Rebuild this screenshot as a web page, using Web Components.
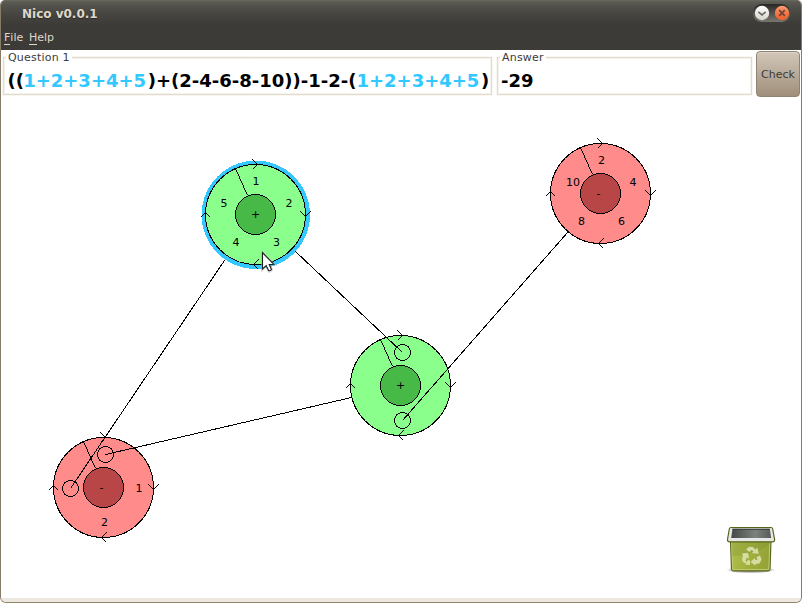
<!DOCTYPE html>
<html lang="en">
<head>
<meta charset="utf-8">
<title>Nico v0.0.1</title>
<style>
html,body{margin:0;padding:0;background:#fff;overflow:hidden}
body{font-family:"DejaVu Sans",sans-serif;font-size:11px}
</style>
</head>
<body>
<app-window></app-window>
<script>
function define(name, html, setup) {
  const t = document.createElement('template');
  t.innerHTML = html;
  customElements.define(name, class extends HTMLElement {
    connectedCallback() {
      if (this.shadowRoot) return;
      this.attachShadow({mode: 'open'}).appendChild(t.content.cloneNode(true));
      if (setup) setup(this, this.shadowRoot);
    }
  });
}

define('title-bar', `
<style>
:host{display:flex;align-items:flex-start;height:27px;padding:0 10px 0 21px;box-sizing:border-box;
 background:linear-gradient(#6b6a5f 0,#5b5a53 2px,#504f49 7px,#45443f 15px,#3c3b37 25px)}
.t{flex:1;font:bold 12px "DejaVu Sans",sans-serif;color:#dfd8c8;line-height:28px;text-shadow:0 1px 1px #2b2a27}
svg{display:block;margin-top:3px}
</style>
<div class="t"><slot></slot></div>
<svg width="39" height="20" viewBox="0 0 39 20">
 <defs>
 <linearGradient id="p" x2="0" y2="1"><stop offset="0" stop-color="#292825"/><stop offset="1" stop-color="#77766e"/></linearGradient>
 <linearGradient id="w" x2="0" y2="1"><stop offset="0" stop-color="#fff"/><stop offset="1" stop-color="#d8d4cb"/></linearGradient>
 <linearGradient id="o" x2="0" y2="1"><stop offset="0" stop-color="#f99b75"/><stop offset=".5" stop-color="#f47747"/><stop offset="1" stop-color="#ec5e2b"/></linearGradient>
 </defs>
 <rect x=".5" y="1" width="38" height="18" rx="9" fill="url(#p)"/>
 <circle cx="10" cy="10" r="7.2" fill="url(#w)"/>
 <path d="M6.3 8.8 L10 12 L13.7 8.8" fill="none" stroke="#6b6a65" stroke-width="1.7"/>
 <circle cx="30" cy="10" r="7.2" fill="url(#o)"/>
 <path d="M27.2 7.2 l5.6 5.6 m0 -5.6 l-5.6 5.6" stroke="#6d4637" stroke-width="1.8"/>
</svg>`);

define('menu-bar', `
<style>:host{display:flex;gap:6px;height:23px;padding-left:3px;background:#3c3b37;color:#dfd8c8;line-height:21px;font-size:11px}</style>
<slot></slot>`);

define('menu-item', `
<style>:host{display:block;white-space:nowrap}
u{text-decoration:none;display:inline-block;line-height:12px;border-bottom:1px solid #dfd8c8}</style>
<u></u><span></span>`, (el, r) => {
  const s = el.getAttribute('label');
  r.querySelector('u').textContent = s[0];
  r.querySelector('span').textContent = s.slice(1);
  el.style.width = el.getAttribute('width') + 'px';
});

define('group-box', `
<style>
:host{display:block;padding-top:7px;box-sizing:border-box;height:45px}
.f{position:relative;height:38px;box-sizing:border-box;border:1px solid #e3dccd;box-shadow:inset 0 0 0 1px #f6f3ec,0 0 0 .5px #f2eee6}
.l{position:absolute;left:2px;top:-7px;background:#fff;padding:0 2px 0 2px;line-height:13px;color:#3c3b37;white-space:nowrap;letter-spacing:var(--ls,0)}
.c{font:bold 18px/21px "DejaVu Sans",sans-serif;color:#000;padding:12px 0 0 3px;white-space:nowrap;display:flex}
</style>
<div class="f"><div class="l"></div><div class="c"><slot></slot></div></div>`,
(el, r) => r.querySelector('.l').append(el.getAttribute('label')));

define('push-button', `
<style>
:host{display:flex;align-items:center;justify-content:center;width:44px;height:46px;margin-top:1px;box-sizing:border-box;border:1px solid #8f8374;border-radius:4px;
background:linear-gradient(#d2c7b8,#b9ab9a 50%,#a08f79);color:#3c3b37;box-shadow:inset 0 1px 0 #ddd4c7}
</style><slot></slot>`);

define('wheel-node', `
<style>
:host{position:absolute;width:112px;height:112px}
svg{display:block;overflow:visible;shape-rendering:crispEdges}
text{font:11px "DejaVu Sans",sans-serif;fill:#000;text-anchor:middle}
</style>
<svg width="112" height="112" viewBox="-55.5 -55.5 112 112"></svg>`, (el, r) => {
  const green = el.getAttribute('tone') === 'green';
  const op = el.getAttribute('op');
  const labels = JSON.parse(el.getAttribute('labels') || '[]');
  const ports = JSON.parse(el.getAttribute('ports') || '[]');
  el.style.left = (+el.getAttribute('x') - 55) + 'px';
  el.style.top = (+el.getAttribute('y') - 55) + 'px';
  r.querySelector('svg').innerHTML =
   (el.hasAttribute('selected') ? '<circle cx=".3" cy=".3" r="54.2" fill="#33c8ff"/>' : '') +
   `<g fill="none" stroke="#000"><circle r="50" fill="${green ? '#8bff8b' : '#ff8b8b'}"/>
    <path d="M-20 -46 L-8 -19 M-3 -55 L2 -50 L-3 -45 M45 -3 L50 2 L55 -3 M3 45 L-2 50 L3 55 M-55 3 L-50 -2 L-45 3"/>
    <circle r="20" fill="${green ? '#46b946' : '#b94646'}"/>
    ${ports.map(p => `<circle cx="${p[0]}" cy="${p[1]}" r="8"/>`).join('')}</g>
    <text x="${op === '+' ? 0 : -2}" y="3.5">${op}</text>` +
   labels.map(l => `<text x="${l[1]}" y="${l[2] - .5}">${l[0]}</text>`).join('');
});

define('link-layer', `
<style>:host{position:absolute;inset:0}svg{display:block;shape-rendering:crispEdges}</style>
<svg width="800" height="497" viewBox="1 101 800 497"><g stroke="#000">
<path d="M224.500 260.500L70.500 488.500M295.500 251.500L402.500 352.500M567.500 232.500L402.500 420.500M351.500 397.500L105.500 454.500"/></g></svg>`);

define('recycle-bin', `
<style>:host{position:absolute;left:724px;top:422px}svg{display:block}</style>
<svg width="52" height="52" viewBox="725 523 52 52">
<defs>
<linearGradient id="g" x2="1" y2=".2"><stop offset="0" stop-color="#b3c04e"/><stop offset=".5" stop-color="#a3b13f"/><stop offset="1" stop-color="#95a337"/></linearGradient>
<linearGradient id="i" x2="1" y2="0"><stop offset="0" stop-color="#454945"/><stop offset=".6" stop-color="#7d817d"/><stop offset="1" stop-color="#585c58"/></linearGradient>
<radialGradient id="s"><stop offset="0" stop-color="#000" stop-opacity=".5"/><stop offset=".7" stop-color="#000" stop-opacity=".25"/><stop offset="1" stop-color="#000" stop-opacity="0"/></radialGradient>
</defs>
<ellipse cx="751" cy="570" rx="25" ry="3.5" fill="url(#s)"/>
<path d="M730.500 540 L731.500 569 Q731.700 570.800 733.500 570.800 L768 570.800 Q769.800 570.800 770 569 L771 540Z" fill="url(#g)" stroke="#566319" stroke-width="1.2"/>
<path d="M731.700 542 L732.600 569.600 H768.800 L769.800 542" fill="none" stroke="#c3cf70" stroke-width="1"/>
<path d="M732 556 Q752 556 770 544 L770 541 H731.500Z" fill="#6b7b22" opacity=".2"/>
<path d="M731 527.500 H771 Q772.500 527.500 772.700 529 L774.600 539.500 Q774.700 541.800 772.500 541.800 H729.700 Q727.300 541.800 727.500 539.500 L729.300 529 Q729.600 527.500 731 527.500Z" fill="#e6e8e6" stroke="#566319" stroke-width="1.2"/>
<path d="M732.500 528.800 H769.800 L771.200 538 H731.200Z" fill="url(#i)"/>
<path d="M732.500 529.300 H769.800" stroke="#343b39" stroke-width="1"/>
<g fill="#e2e9bd" opacity=".8">
<path d="M746 549.500 L749 546.800 L753 547 L755 549.500 L757.500 547.800 L758.700 554 L751.800 553 L753.500 551.500 L751.500 550 L749.500 552Z"/>
<path d="M741.500 553.500 L748 552.700 L749 558.700 L746.700 557.500 L745.500 560.500 L747 562.500 L744 563 L742 560 L743 555.500Z"/>
<path d="M756.500 557 L760 555.500 L761.500 559.500 L759.500 563.500 L755.500 564 L755.500 565.800 L750.500 562 L755 557.700 L755.200 560 L757.500 559.800Z"/>
<path d="M745 564.500 L748 560 L750 560.500 L750 565Z"/>
</g></svg>`);

define('mouse-pointer', `
<style>:host{position:absolute;left:260px;top:150px}svg{display:block}</style>
<svg width="18" height="24" viewBox="261 251 18 24"><path d="M262.500 253 V269.200 L266.200 265.700 L268.800 271 Q270.500 271.700 271.700 269.800 L269.500 264.700 L273.500 264.200Z" fill="#fff" stroke="#bbb" stroke-width="3" opacity=".5"/><path d="M262.500 252.700 V269 L266.200 265.600 L268.600 270.600 Q270.300 271.200 271.500 269.500 L269.200 264.600 L273.700 264.200Z" fill="#fff" stroke="#1b1b1b" stroke-width="1.1"/></svg>`);

define('app-window', `
<style>
:host{display:flex;width:802px;height:603px;box-sizing:border-box;background:#fff}
.w{flex:1;display:flex;flex-direction:column;overflow:hidden;border:1px solid #857b66;border-top:0;border-bottom-color:#8f8468;border-radius:5px 5px 6px 6px;background:#fff}
.bar{display:flex;height:51px;box-sizing:border-box;padding:0 0 0 2px}
.q{width:489px;margin-right:5px}.a{width:255px;margin-right:4px}
.v{color:#33c8ff;margin-right:1.6px}
.s{margin-left:.5px;margin-right:-.8px}
.canvas{position:relative;flex:1}
.status{height:4px;background:#ede8df}
menu-item{flex:none}
</style>
<div class="w">
<title-bar>Nico v0.0.1</title-bar>
<menu-bar><menu-item label="File" width="19"></menu-item><menu-item label="Help" width="26"></menu-item></menu-bar>
<div class="bar">
<group-box class="q" label="Question 1" style="--ls:.2px"><span class="s">((</span><span class="v">1+2+3+4+5</span><span>)+(2-4-6-8-10))-1-2-(</span><span class="v">1+2+3+4+5</span><span>)</span></group-box>
<group-box class="a" label="Answer" style="--ls:.2px"><span>-29</span></group-box>
<push-button>Check</push-button>
</div>
<div class="canvas">
<wheel-node tone="green" op="+" selected x="254" y="113" labels='[["1",0.5,-29],["2",33.5,-7],["3",21,32],["4",-19.500,32],["5",-31.500,-7]]'></wheel-node>
<wheel-node tone="red" op="-" x="599" y="92" labels='[["2",1,-29],["4",32.500,-7],["6",21,32],["8",-19,32],["10",-27.500,-7]]'></wheel-node>
<wheel-node tone="green" op="+" x="399" y="284" ports="[[2,-33],[2,35]]"></wheel-node>
<wheel-node tone="red" op="-" x="102" y="386" labels='[["1",35.500,5],["2",1,39]]' ports="[[-33,1],[2,-33]]"></wheel-node>
<link-layer></link-layer>
<recycle-bin></recycle-bin>
<mouse-pointer></mouse-pointer>
</div>
<div class="status"></div>
</div>`);
</script>
</body>
</html>
